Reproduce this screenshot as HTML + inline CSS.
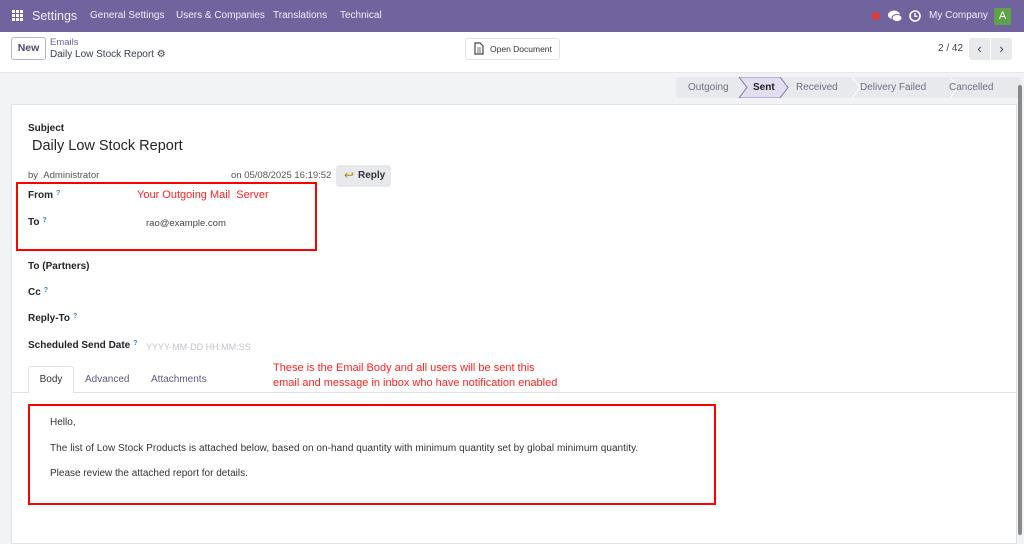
<!DOCTYPE html>
<html><head><meta charset="utf-8"><style>
*{box-sizing:border-box;margin:0;padding:0}
body{width:1024px;height:535px;overflow:hidden;background:#f2f3f5;font-family:"Liberation Sans",sans-serif;font-size:11px;color:#374151;position:relative}
.nav{position:absolute;left:0;top:0;width:1024px;height:32px;background:#71639e;color:#fff}
.nav span{position:absolute;top:10px;font-size:10px;color:#f0eef6;white-space:nowrap}
.cp{position:absolute;left:0;top:32px;width:1024px;height:41px;background:#fff;border-bottom:1px solid #e5e7eb}
.abs{position:absolute;white-space:nowrap}
.card{position:absolute;left:11px;top:104px;width:1006px;height:440px;background:#fff;border:1px solid #dee2e6}
.lbl{position:absolute;left:28px;font-weight:bold;font-size:10px;color:#212529}
.q{font-size:7px;color:#3b82c4;vertical-align:top;margin-left:3px}
.red{color:#ff2222;font-size:11px;position:absolute;white-space:nowrap}
.stat{position:absolute;top:77px;height:21px;background:#e7e9ed;font-size:10px;color:#6b7280;line-height:21px;white-space:nowrap}
</style></head><body>
<div class="nav">
 <svg class="abs" style="left:12px;top:10px" width="11" height="11"><g fill="#fff"><rect x="0" y="0" width="3" height="3"/><rect x="4" y="0" width="3" height="3"/><rect x="8" y="0" width="3" height="3"/><rect x="0" y="4" width="3" height="3"/><rect x="4" y="4" width="3" height="3"/><rect x="8" y="4" width="3" height="3"/><rect x="0" y="8" width="3" height="3"/><rect x="4" y="8" width="3" height="3"/><rect x="8" y="8" width="3" height="3"/></g></svg>
 <span style="left:32px;top:9px;font-size:12.5px">Settings</span>
 <span style="left:90px">General Settings</span>
 <span style="left:176px">Users &amp; Companies</span>
 <span style="left:273px">Translations</span>
 <span style="left:340px">Technical</span>
 <div class="abs" style="left:872px;top:12px;width:8px;height:8px;border-radius:50%;background:#e03a3a"></div>
 <svg class="abs" style="left:888px;top:10px" width="14" height="12"><ellipse cx="6" cy="5" rx="6" ry="4.5" fill="#fff"/><ellipse cx="9" cy="8" rx="5" ry="3.5" fill="#fff" stroke="#71639e"/></svg>
 <svg class="abs" style="left:909px;top:10px" width="12" height="12"><circle cx="6" cy="6" r="5" fill="none" stroke="#fff" stroke-width="1.6"/><path d="M6 3v3.3h2.4" stroke="#fff" stroke-width="1.4" fill="none"/></svg>
 <span style="left:929px">My Company</span>
 <div class="abs" style="left:994px;top:8px;width:17px;height:17px;background:#5ea34a;border-radius:2px;color:#fff;font-size:11px;text-align:center;line-height:17px">A</div>
</div>
<div class="cp">
 <div class="abs" style="left:11px;top:5px;width:35px;height:23px;border:1px solid #b9b1cf;border-radius:3px;color:#4b4b6b;font-weight:bold;font-size:10.5px;text-align:center;line-height:21px">New</div>
 <div class="abs" style="left:50px;top:5px;color:#71639e;font-size:9.5px">Emails</div>
 <div class="abs" style="left:50px;top:17px;color:#374151;font-size:10px">Daily Low Stock Report <span style="color:#444">⚙</span></div>
 <div class="abs" style="left:465px;top:6px;width:95px;height:22px;border:1px solid #dee2e6;border-radius:3px;font-size:8.5px;line-height:20px;padding-left:24px;color:#333">Open Document</div>
 <svg class="abs" style="left:474px;top:10px" width="10" height="13"><path d="M1 1h5l3 3v8H1z" fill="none" stroke="#444" stroke-width="1.2"/><path d="M3 6h4M3 8h4M3 10h4" stroke="#444" stroke-width=".8"/></svg>
 <div class="abs" style="left:938px;top:11px;font-size:10px">2 / 42</div>
 <div class="abs" style="left:969px;top:6px;width:21px;height:22px;background:#e7e9ed;border-radius:3px 0 0 3px;text-align:center;line-height:21px;font-size:13px">&lsaquo;</div>
 <div class="abs" style="left:991px;top:6px;width:21px;height:22px;background:#e7e9ed;border-radius:0 3px 3px 0;text-align:center;line-height:21px;font-size:13px">&rsaquo;</div>
</div>
<div class="stat" style="left:676px;width:345px;border-radius:3px"></div>
<svg class="abs" style="left:676px;top:77px" width="345" height="21"><path d="M63 0h41l8 10.5-8 10.5H63l8-10.5z" fill="#e2def0" stroke="#71639e" stroke-width=".8"/><path d="M176 0l8 10.5-8 10.5M274 0l8 10.5-8 10.5" fill="none" stroke="#fff"/></svg>
<div class="stat" style="left:688px;background:none">Outgoing</div>
<div class="stat" style="left:753px;background:none;color:#222;font-weight:bold">Sent</div>
<div class="stat" style="left:796px;background:none">Received</div>
<div class="stat" style="left:860px;background:none">Delivery Failed</div>
<div class="stat" style="left:949px;background:none">Cancelled</div>
<div class="abs" style="left:1018px;top:85px;width:4px;height:450px;background:#888;border-radius:2px"></div>
<div class="card"></div>
<div class="lbl" style="top:123px">Subject</div>
<div class="abs" style="left:32px;top:138px;font-size:14.5px;color:#212529">Daily Low Stock Report</div>
<div class="abs" style="left:28px;top:170px;font-size:9.5px;color:#555">by &nbsp;Administrator</div>
<div class="abs" style="left:231px;top:170px;font-size:9.5px;color:#555">on 05/08/2025 16:19:52</div>
<div class="abs" style="left:336px;top:165px;width:55px;height:22px;background:#e7e9ed;border-radius:3px;font-weight:bold;font-size:10px;line-height:22px;padding-left:22px;color:#333">Reply</div>
<div class="abs" style="left:344px;top:168px;color:#b8860b;font-size:12px">↩</div>
<div class="abs" style="left:16px;top:182px;width:301px;height:69px;border:2px solid #ff0000"></div>
<div class="lbl" style="top:190px">From<span class="q">?</span></div>
<div class="red" style="left:137px;top:189px">Your Outgoing Mail &nbsp;Server</div>
<div class="lbl" style="top:217px">To<span class="q">?</span></div>
<div class="abs" style="left:146px;top:218px;font-size:9.5px;color:#444">rao@example.com</div>
<div class="lbl" style="top:261px">To (Partners)</div>
<div class="lbl" style="top:287px">Cc<span class="q">?</span></div>
<div class="lbl" style="top:313px">Reply-To<span class="q">?</span></div>
<div class="lbl" style="top:340px">Scheduled Send Date<span class="q">?</span></div>
<div class="abs" style="left:146px;top:342px;font-size:9px;color:#c0c4cc">YYYY-MM-DD HH:MM:SS</div>
<div class="red" style="left:273px;top:362px">These is the Email Body and all users will be sent this</div>
<div class="red" style="left:273px;top:377px">email and message in inbox who have notification enabled</div>
<div class="abs" style="left:12px;top:392px;width:1004px;border-top:1px solid #dee2e6"></div>
<div class="abs" style="left:28px;top:366px;width:46px;height:27px;background:#fff;border:1px solid #dee2e6;border-bottom:none;border-radius:3px 3px 0 0;text-align:center;line-height:26px;font-size:10px;color:#333">Body</div>
<div class="abs" style="left:85px;top:374px;font-size:10px;color:#5f5a80">Advanced</div>
<div class="abs" style="left:151px;top:374px;font-size:10px;color:#5f5a80">Attachments</div>
<div class="abs" style="left:28px;top:404px;width:688px;height:101px;border:2px solid #ff0000"></div>
<div class="abs" style="left:50px;top:417px;font-size:10px;color:#333">Hello,</div>
<div class="abs" style="left:50px;top:443px;font-size:10px;color:#333;letter-spacing:0.05px">The list of Low Stock Products is attached below, based on on-hand quantity with minimum quantity set by global minimum quantity.</div>
<div class="abs" style="left:50px;top:468px;font-size:10px;color:#333">Please review the attached report for details.</div>
</body></html>
